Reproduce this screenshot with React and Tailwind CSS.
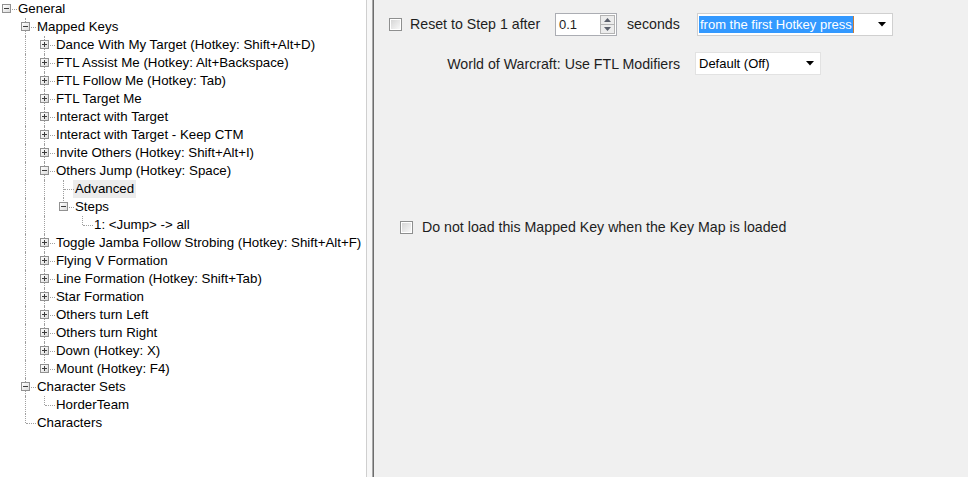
import React from "react";

const tree = [
  {
    label: "General",
    open: true,
    children: [
      {
        label: "Mapped Keys",
        open: true,
        children: [
          { label: "Dance With My Target (Hotkey: Shift+Alt+D)", children: [] },
          { label: "FTL Assist Me (Hotkey: Alt+Backspace)", children: [] },
          { label: "FTL Follow Me (Hotkey: Tab)", children: [] },
          { label: "FTL Target Me", children: [] },
          { label: "Interact with Target", children: [] },
          { label: "Interact with Target - Keep CTM", children: [] },
          { label: "Invite Others (Hotkey: Shift+Alt+I)", children: [] },
          {
            label: "Others Jump (Hotkey: Space)",
            open: true,
            children: [
              { label: "Advanced", selected: true },
              { label: "Steps", open: true, children: [{ label: "1: <Jump> -> all" }] },
            ],
          },
          { label: "Toggle Jamba Follow Strobing (Hotkey: Shift+Alt+F)", children: [] },
          { label: "Flying V Formation", children: [] },
          { label: "Line Formation (Hotkey: Shift+Tab)", children: [] },
          { label: "Star Formation", children: [] },
          { label: "Others turn Left", children: [] },
          { label: "Others turn Right", children: [] },
          { label: "Down (Hotkey: X)", children: [] },
          { label: "Mount (Hotkey: F4)", children: [] },
        ],
      },
      { label: "Character Sets", open: true, children: [{ label: "HorderTeam" }] },
      { label: "Characters" },
    ],
  },
];

function flatten(nodes, ancestors, out, isRoot) {
  nodes.forEach((node, i) => {
    const last = i === nodes.length - 1;
    out.push({ ...node, ancestors, last, first: isRoot && i === 0 });
    if (node.open && node.children) {
      flatten(node.children, [...ancestors, !last], out, false);
    }
  });
  return out;
}

function Expander({ open }) {
  return (
    <span className="absolute left-[2px] top-[4px] z-10 h-[9px] w-[9px] border border-[#919191] bg-gradient-to-br from-white to-[#dcdcdc]">
      <span className="absolute left-[1px] top-[3px] h-px w-[5px] bg-[#3c3c3c]" />
      {!open && <span className="absolute left-[3px] top-[1px] h-[5px] w-px bg-[#3c3c3c]" />}
    </span>
  );
}

function TreeRow({ row }) {
  // collapsed nodes carry an empty children list, leaves have none
  const expandable = row.children !== undefined;
  return (
    <div className="flex h-[18px] items-center whitespace-nowrap">
      {row.ancestors.map((more, i) => (
        <div key={i} className="relative h-full w-[19px] shrink-0">
          {more && <span className="absolute left-[6px] top-0 h-full border-l border-dotted border-[#a0a0a0]" />}
        </div>
      ))}
      <div className="relative h-full w-[19px] shrink-0">
        {!row.first && (
          <span
            className={
              "absolute left-[6px] top-0 border-l border-dotted border-[#a0a0a0] " +
              (row.last ? "h-[9px]" : "h-full")
            }
          />
        )}
        <span className="absolute left-[7px] top-[9px] w-[10px] border-t border-dotted border-[#a0a0a0]" />
        {expandable && <Expander open={row.open} />}
      </div>
      <span className={"ml-[-3px] px-[2px] leading-[18px] " + (row.selected ? "bg-[#ececec]" : "")}>
        {row.label}
      </span>
    </div>
  );
}

function Checkbox() {
  return (
    <span className="block h-[13px] w-[13px] shrink-0 border border-[#8e8f8f] bg-white p-px">
      <span className="block h-full w-full bg-gradient-to-br from-[#d6d6d6] to-[#f8f8f8]" />
    </span>
  );
}

function Arrow() {
  return (
    <svg width="8" height="5" viewBox="0 0 8 5" className="shrink-0">
      <path d="M0 0 H8 L4 4.5 Z" fill="#000" />
    </svg>
  );
}

export default function App() {
  const rows = flatten(tree, [], [], true);
  return (
    <div
      className="flex h-[477px] w-[968px] overflow-hidden bg-[#f0f0f0] text-black"
      style={{ fontFamily: '"Liberation Sans", Arial, sans-serif' }}
    >
      <div className="h-full w-[366px] shrink-0 bg-white text-[13.3px]">
        {rows.map((row, i) => (
          <TreeRow key={i} row={row} />
        ))}
      </div>
      <div className="h-full w-px shrink-0 bg-[#cfcfcf]" />
      <div className="h-full w-[5px] shrink-0 bg-[#f7f7f7]" />
      <div className="h-full w-px shrink-0 bg-[#a8a8a8]" />
      <div className="h-full w-px shrink-0 bg-[#6d6d6d]" />

      <div className="flex h-full flex-1 flex-col pt-[13px] text-[14.2px] text-[#1e1e1e]">
        <div className="flex h-[23px] items-center pl-[15px]">
          <Checkbox />
          <span className="ml-[8px] w-[145px] pt-px">Reset to Step 1 after</span>
          <div className="flex h-[23px] w-[62px] items-center border border-[#abadb3] bg-white pl-[3px] text-[13px]">
            <span className="flex-1">0.1</span>
            <div className="mr-px flex h-[19px] w-[15px] flex-col">
              <span className="flex flex-1 items-center justify-center border border-[#b4b4b4] bg-[#ececec]">
                <svg width="7" height="4" viewBox="0 0 7 4"><path d="M0 4 L3.5 0 L7 4 Z" fill="#5a5f6b" /></svg>
              </span>
              <span className="flex flex-1 items-center justify-center border border-t-0 border-[#b4b4b4] bg-[#ececec]">
                <svg width="7" height="4" viewBox="0 0 7 4"><path d="M0 0 H7 L3.5 4 Z" fill="#5a5f6b" /></svg>
              </span>
            </div>
          </div>
          <span className="ml-[10px] w-[70px] pt-px">seconds</span>
          <div className="flex h-[23px] w-[196px] items-center border border-[#d0d0d0] bg-white pl-px pr-[6px] text-[13px]">
            <span className="flex h-[17px] items-center border-r border-[#c87d3a] bg-[#3399ff] px-px text-white">
              from the first Hotkey press
            </span>
            <span className="flex-1" />
            <Arrow />
          </div>
        </div>

        <div className="mt-[16px] flex h-[23px] items-center">
          <span className="ml-[72px] w-[234px] pt-[2px] text-right">World of Warcraft: Use FTL Modifiers</span>
          <div className="ml-[15px] flex h-[23px] w-[126px] items-center border border-[#e2e2e2] bg-white pl-[3px] pr-[6px] text-[13px] text-black">
            <span className="flex-1">Default (Off)</span>
            <Arrow />
          </div>
        </div>

        <div className="mt-[141px] flex h-[23px] items-center pl-[26px]">
          <Checkbox />
          <span className="ml-[9px] pt-px">Do not load this Mapped Key when the Key Map is loaded</span>
        </div>
      </div>
    </div>
  );
}
